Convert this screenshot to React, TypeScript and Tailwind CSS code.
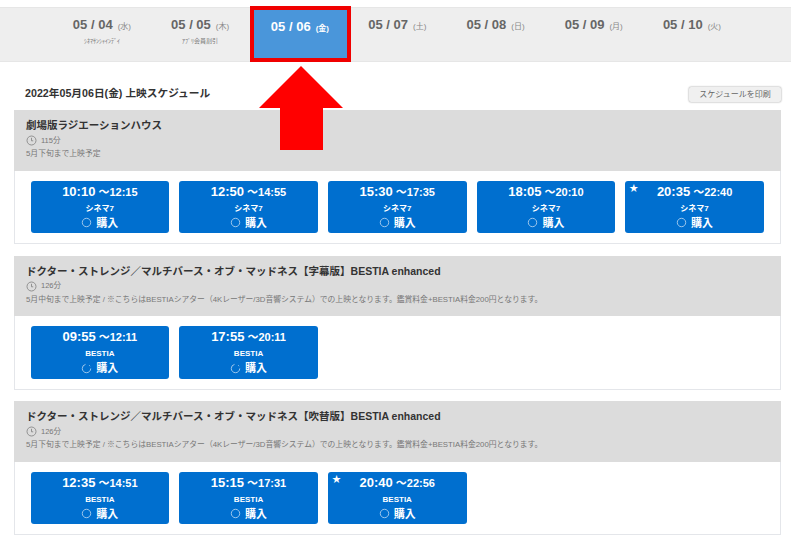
import React from "react";

interface Showing {
  start: string;
  end: string;
  star?: boolean;
  open?: boolean;
}

interface Movie {
  title: string;
  length: string;
  note: string;
  screen: string;
  showings: Showing[];
}

const days = [
  { date: "05 / 04", week: "(水)", sub: "ｼﾈﾏｻﾝｼｬｲﾝﾃﾞｲ" },
  { date: "05 / 05", week: "(木)", sub: "ｱﾌﾟﾘ会員割引" },
  { date: "05 / 06", week: "(金)", sub: "", active: true },
  { date: "05 / 07", week: "(土)", sub: "" },
  { date: "05 / 08", week: "(日)", sub: "" },
  { date: "05 / 09", week: "(月)", sub: "" },
  { date: "05 / 10", week: "(火)", sub: "" },
];

const bestiaNote =
  " / ※こちらはBESTIAシアター（4Kレーザー/3D音響システム）での上映となります。鑑賞料金+BESTIA料金200円となります。";

const movies: Movie[] = [
  {
    title: "劇場版ラジエーションハウス",
    length: "115分",
    note: "5月下旬まで上映予定",
    screen: "シネマ7",
    showings: [
      { start: "10:10", end: "12:15" },
      { start: "12:50", end: "14:55" },
      { start: "15:30", end: "17:35" },
      { start: "18:05", end: "20:10" },
      { start: "20:35", end: "22:40", star: true },
    ],
  },
  {
    title: "ドクター・ストレンジ／マルチバース・オブ・マッドネス【字幕版】BESTIA enhanced",
    length: "126分",
    note: "5月中旬まで上映予定" + bestiaNote,
    screen: "BESTIA",
    showings: [
      { start: "09:55", end: "12:11", open: true },
      { start: "17:55", end: "20:11", open: true },
    ],
  },
  {
    title: "ドクター・ストレンジ／マルチバース・オブ・マッドネス【吹替版】BESTIA enhanced",
    length: "126分",
    note: "5月下旬まで上映予定" + bestiaNote,
    screen: "BESTIA",
    showings: [
      { start: "12:35", end: "14:51" },
      { start: "15:15", end: "17:31" },
      { start: "20:40", end: "22:56", star: true },
    ],
  },
];

const Clock = () => (
  <svg width="11" height="11" viewBox="0 0 11 11" fill="none" stroke="#888" strokeWidth="0.9">
    <circle cx="5.5" cy="5.5" r="4.5" />
    <path d="M5.5 2.8V5.8H7.2" />
  </svg>
);

const Spinner = ({ open }: { open?: boolean }) => (
  <svg width="11" height="11" viewBox="0 0 12 12" fill="none" stroke="#a9cdee" strokeWidth="1">
    <circle cx="6" cy="6" r="4.6" strokeDasharray={open ? "20 4 1.5 3" : undefined} />
  </svg>
);

const ShowingButton = ({ item, screen }: { item: Showing; screen: string }) => (
  <div className="relative flex h-[52.5px] w-[138.7px] flex-col items-center rounded-[3px] bg-[#006fcf] text-white">
    {item.star && <span className="absolute left-[4px] top-[2px] text-[9px] leading-[10px]">★</span>}
    <div className="mt-[1px] flex h-[19px] items-baseline">
      <span className="text-[13px] font-bold leading-[19px]">{item.start}</span>
      <span className="ml-[3px] text-[11px] font-bold leading-[19px]">～{item.end}</span>
    </div>
    <div className="mt-[2px] h-[12px] text-[8px] font-bold leading-[12px]">{screen}</div>
    <div className="flex h-[16px] items-center gap-[4px]">
      <Spinner open={item.open} />
      <span className="text-[11px] font-bold leading-[16px]">購入</span>
    </div>
  </div>
);

const MovieCard = ({ movie }: { movie: Movie }) => (
  <section className="h-[134.2px] border-x border-b border-[#e4e6ea]">
    <div className="-mx-px h-[60.7px] bg-[#dcdcdc] pl-[12px] pt-[7px]">
      <h2 className="text-[10.5px] font-bold leading-[16px] text-[#333]">{movie.title}</h2>
      <div className="mt-[1px] flex h-[13px] items-center gap-[4px] text-[7.5px] text-[#777]">
        <Clock />
        <span>{movie.length}</span>
      </div>
      <p className="mt-[1px] text-[7.8px] leading-[12px] text-[#777]">{movie.note}</p>
    </div>
    <div className="flex gap-[10px] pl-[15.5px] pt-[10px]">
      {movie.showings.map((item) => (
        <ShowingButton key={item.start} item={item} screen={movie.screen} />
      ))}
    </div>
  </section>
);

const App = () => {
  return (
    <div className="relative h-[546px] w-[791px] overflow-hidden bg-white pt-[7px] font-['Liberation_Sans','Noto_Sans_CJK_JP',sans-serif]">
      <nav className="flex h-[55px] border-y border-[#e6e6e6] bg-[#eeeeee] pl-[53px]">
        {days.map((day) =>
          day.active ? (
            <div
              key={day.date}
              className="-mt-[2px] ml-[1px] -mr-[3px] h-[56px] w-[101px] shrink-0 border-[4px] border-[#f00000] bg-[#4a96da] pr-[2px] pt-[4px] text-center text-white"
            >
              <span className="text-[13px] font-bold leading-[18px]">{day.date}</span>
              <span className="ml-[5px] text-[8px] font-bold">{day.week}</span>
            </div>
          ) : (
            <div key={day.date} className="-ml-[0.4px] w-[98.6px] shrink-0 pt-[7px] text-center text-[#666]">
              <div className="h-[19px] leading-[18px]">
                <span className="text-[13px] font-bold">{day.date}</span>
                <span className="ml-[5px] text-[8px] text-[#888]">{day.week}</span>
              </div>
              <div className="mt-[3px] text-[6px] leading-[8px] text-[#777]">{day.sub}</div>
            </div>
          ),
        )}
      </nav>

      <main className="pl-[14px]">
        <div className="flex h-[48px] w-[767px] items-start justify-between pl-[11px]">
          <h1 className="mt-[22px] text-[10.7px] font-bold leading-[18px] text-[#333]">2022年05月06日(金) 上映スケジュール</h1>
          <button className="mt-[25px] h-[15px] w-[92px] rounded-[2px] bg-[#f0f0f0] text-[8px] leading-[15px] text-[#666] shadow-[0_0_2px_#888]">
            スケジュールを印刷
          </button>
        </div>
        <div className="flex w-[767px] flex-col gap-[11.4px]">
          {movies.map((movie) => (
            <MovieCard key={movie.title} movie={movie} />
          ))}
        </div>
      </main>

      <svg className="absolute left-[259px] top-[66px]" width="85" height="85" viewBox="0 0 85 85">
        <path d="M42 0L84 42H64V84H21V42H0Z" fill="#ff0000" />
      </svg>
    </div>
  );
};

export default App;
